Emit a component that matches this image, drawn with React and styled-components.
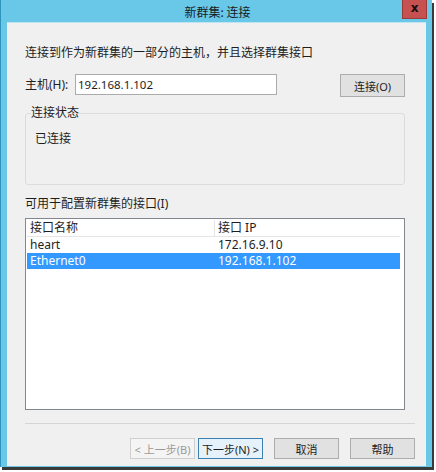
import React from 'react';
import styled, { createGlobalStyle } from 'styled-components';

const GlobalStyle = createGlobalStyle`
    body {
        margin: 0;
        background: #ffffff;
        font-family: "Noto Sans", "Noto Sans CJK SC", sans-serif;
        font-size: 12px;
        color: #1e1e1e;
    }
`;

const rows = [
    { name: 'heart', ip: '172.16.9.10' },
    { name: 'Ethernet0', ip: '192.168.1.102', selected: true },
];

export default function App() {
    return (
        <>
            <GlobalStyle />
            <Page>
                <Frame>
                    <TitleBar>
                        <Title>新群集: 连接</Title>
                        <Close>x</Close>
                    </TitleBar>
                    <Client>
                        <Intro>连接到作为新群集的一部分的主机，并且选择群集接口</Intro>
                        <HostRow>
                            <Label>主机(H):</Label>
                            <Input defaultValue="192.168.1.102" />
                            <Button $height="23px">连接(O)</Button>
                        </HostRow>
                        <Group>
                            <Legend>连接状态</Legend>
                            <Status>已连接</Status>
                        </Group>
                        <Caption>可用于配置新群集的接口(I)</Caption>
                        <List>
                            <Header>
                                <HeadCell>接口名称</HeadCell>
                                <HeadCell>接口 IP</HeadCell>
                            </Header>
                            {rows.map((r) => (
                                <Row key={r.name} $selected={r.selected}>
                                    <Cell>{r.name}</Cell>
                                    <Cell>{r.ip}</Cell>
                                </Row>
                            ))}
                        </List>
                        <Separator />
                        <Footer>
                            <Button $disabled>&lt; 上一步(B)</Button>
                            <Button $focused>下一步(N) &gt;</Button>
                            <Spacer />
                            <Button>取消</Button>
                            <Spacer />
                            <Button>帮助</Button>
                        </Footer>
                    </Client>
                </Frame>
            </Page>
        </>
    );
}

const Page = styled.div`
    width: 436px;
    height: 472px;
    overflow: hidden;
`;

const Frame = styled.div`
    width: 432px;
    height: 467px;
    box-sizing: border-box;
    display: flex;
    flex-direction: column;
    background: #69c8e8;
    border-left: 1px solid #2f93bb;
    padding: 0 6px 1px 6px;
    box-shadow: 2px 3px 0 #3a3a3a;
`;

const TitleBar = styled.div`
    height: 22px;
    flex-shrink: 0;
    display: flex;
    align-items: center;
    justify-content: center;
    position: relative;
`;

const Title = styled.div`
    font-family: "Noto Sans CJK SC", sans-serif;
    font-size: 12px;
    color: #1a1a1a;
    padding-left: 2px;
`;

const Close = styled.div`
    position: absolute;
    right: -1px;
    top: 0;
    width: 25px;
    height: 19px;
    background: #c75050;
    border: 1px solid #9c3b36;
    border-top: none;
    box-sizing: border-box;
    color: #111;
    font-family: "DejaVu Sans", sans-serif;
    font-weight: bold;
    font-size: 12px;
    display: flex;
    align-items: center;
    justify-content: center;
    padding-bottom: 2px;
`;

const Client = styled.div`
    flex: 1;
    background: #f0f0f0;
    border-top: 1px solid #bfe4f2;
    display: flex;
    flex-direction: column;
    padding: 22px 11px 0 18px;
`;

const Intro = styled.div`
    line-height: 16px;
`;

const HostRow = styled.div`
    display: flex;
    align-items: flex-start;
    margin-top: 13px;
    padding-right: 10px;
`;

const Label = styled.div`
    width: 50px;
    line-height: 21px;
`;

const Input = styled.input`
    width: 202px;
    height: 21px;
    box-sizing: border-box;
    border: 1px solid #ababab;
    background: #ffffff;
    font-family: inherit;
    font-size: 11.5px;
    color: #1e1e1e;
    padding: 0 2px;
    margin-right: 63px;
    outline: none;
`;

const Button = styled.div`
    width: 65px;
    height: ${(p) => p.$height || '21px'};
    box-sizing: border-box;
    display: flex;
    align-items: center;
    justify-content: center;
    background: ${(p) => (p.$disabled ? '#f4f4f4' : p.$focused ? '#e5f1fb' : '#e1e1e1')};
    border: 1px solid ${(p) => (p.$disabled ? '#d0d0d0' : p.$focused ? '#3c7fb1' : '#adadad')};
    color: ${(p) => (p.$disabled ? '#9a9a9a' : '#1e1e1e')};
    font-size: 11px;
`;

const Group = styled.fieldset`
    margin: 10px 10px 0 0;
    padding: 4px 9px 0;
    height: 78px;
    box-sizing: border-box;
    border: 1px solid #dcdcdc;
    border-radius: 3px;
`;

const Legend = styled.legend`
    padding: 0;
    margin-left: -4px;
    line-height: 12px;
    color: #1e1e1e;
`;

const Status = styled.div`
    line-height: 16px;
    margin-top: 8px;
`;

const Caption = styled.div`
    margin-top: 11px;
    line-height: 16px;
`;

const List = styled.div`
    margin: 6px 10px 0 0;
    height: 192px;
    box-sizing: border-box;
    background: #ffffff;
    border: 1px solid #828790;
    padding: 1px;
`;

const Header = styled.div`
    display: grid;
    grid-template-columns: 187px 1fr;
    height: 16px;
    border-bottom: 1px solid #e5e5e5;
    margin-right: 3px;
`;

const HeadCell = styled.div`
    padding-left: 3px;
    line-height: 16px;
    & + & {
        border-left: 1px solid #e5e5e5;
    }
`;

const Row = styled.div`
    display: grid;
    grid-template-columns: 188px 1fr;
    height: 16px;
    margin-right: 3px;
    background: ${(p) => (p.$selected ? '#3399ff' : 'transparent')};
    color: ${(p) => (p.$selected ? '#ffffff' : '#1e1e1e')};
`;

const Cell = styled.div`
    padding-left: 3px;
    line-height: 16px;
`;

const Separator = styled.div`
    height: 1px;
    background: #d5d5d5;
    margin-top: 13px;
`;

const Footer = styled.div`
    display: flex;
    justify-content: flex-end;
    gap: 3px;
    margin-top: 14px;
`;

const Spacer = styled.div`
    width: 5px;
`;
